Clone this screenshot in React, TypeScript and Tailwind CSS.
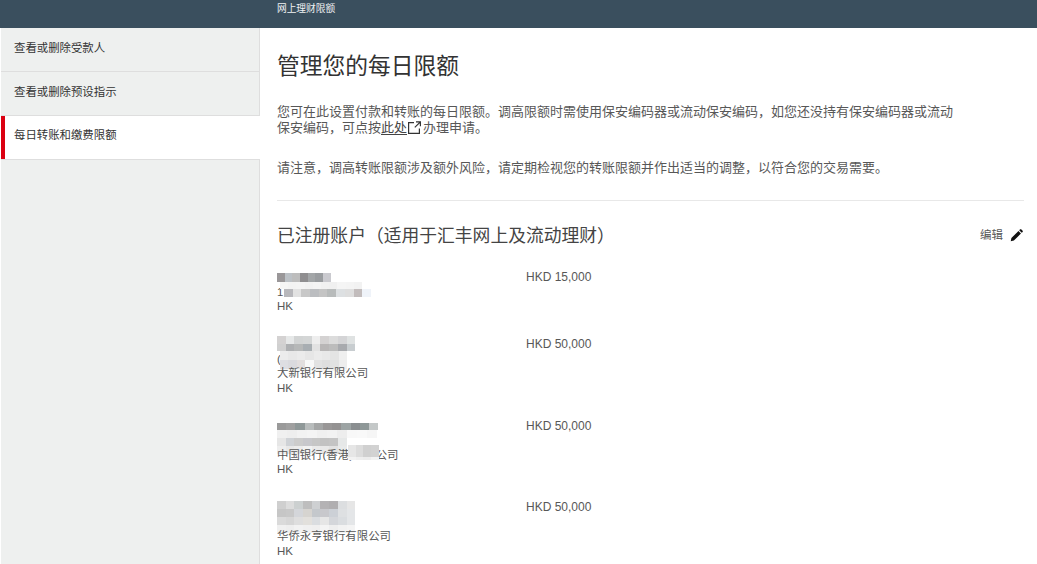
const font = "font-['Liberation_Sans','Noto_Sans_CJK_SC',sans-serif]";

interface MosaicRow {
  x: number;
  h: number;
  w: number;
  c: string[];
}

interface Account {
  under: string;
  bank?: string;
  amount: string;
  top: number;
  mosaic: MosaicRow[];
  patch?: MosaicRow[];
}

const accounts: Account[] = [
  {
    under: "1",
    amount: "HKD 15,000",
    top: 3,
    mosaic: [
      { x: 0, h: 9, w: 7.7, c: ["#9a9799", "#bcc1c6", "#bdbdbd", "#8f8e90", "#a3a6a8", "#9a9da0", "#cacacf"] },
      { x: 3, h: 7, w: 8.2, c: ["#f5f5f5", "#f3f3f3", "#f4f4f4", "#f2f2f2", "#f4f4f4", "#f1f1f1", "#f0f0f0", "#f5f5f5", "#f4f4f4", "#f2f2f2"] },
      { x: 7, h: 8, w: 8.7, c: ["#b8b8bc", "#e2e2e2", "#c8c8c8", "#bbbdc0", "#c4c4c4", "#b8bbbb", "#dde0e2", "#dedede", "#c2bcbc", "#eff3f9"] },
    ],
  },
  {
    under: "(",
    bank: "大新银行有限公司",
    amount: "HKD 50,000",
    top: -1.2,
    mosaic: [
      { x: 0, h: 8, w: 8.7, c: ["#d4d2d2", "#e6e8e8", "#d2d4d4", "#d4d6d6", "#eeeeee", "#d4d2d2", "#dcdcdc", "#d4d4d6", "#dfe2e2"] },
      { x: 0, h: 7.5, w: 8.7, c: ["#d0d0d0", "#aeb0b2", "#b6b8b8", "#a8aeb2", "#e2e2e2", "#b8b6b6", "#bcbcbc", "#a8aaae", "#c8cdd0"] },
      { x: 3, h: 8.5, w: 8.4, c: ["#ececec", "#e8e8e8", "#ebebeb", "#e6e6e6", "#ebebeb", "#e8e8e8", "#e4e4e4", "#efefef"] },
      { x: 3, h: 9, w: 8.4, c: ["#dedee2", "#dadade", "#e2dede", "#f8f8f8", "#e2e2e2", "#dedede", "#e2e2e2", "#ededed"] },
      { x: 3, h: 2, w: 8.4, c: ["#f2f2f2", "#f4f4f4", "#f2f2f2", "#f6f6f6", "#f2f2f2", "#f4f4f4", "#f2f2f2", "#f6f6f6"] },
    ],
  },
  {
    under: "",
    bank: "中国银行(香港)有限公司",
    amount: "HKD 50,000",
    top: 4.2,
    mosaic: [
      { x: 0, h: 7.3, w: 9.2, c: ["#9a9a9a", "#a0a0a0", "#8f9898", "#b8bcbc", "#a4a6a6", "#999797", "#949292", "#9da4a4", "#8a8e90", "#8f9898", "#c4c8c8"] },
      { x: 0, h: 7.7, w: 10, c: ["#f0f0f0", "#eeeeee", "#f2f2f2", "#f4f4f4", "#f0f0f0", "#f2f2f2", "#ededed", "#f8f8f8", "#f9f9f9", "#f6f6f6"] },
      { x: 0, h: 8.3, w: 8.7, c: ["#e6e6e6", "#cfd2d6", "#cccccc", "#c8c8cc", "#c6c6c6", "#c2c2c2", "#c4c4c4", "#e6e8e8"] },
      { x: 0, h: 8.3, w: 8.7, c: ["#eeeeee", "#e8e8e8", "#ececec", "#f2f2f2", "#eaeaea", "#e8e8e8", "#e2e2e2", "#e8eaea"] },
    ],
    patch: [
      { x: 0, h: 12, w: 7.7, c: ["#e6e6e6", "#dcdcdc", "#d0d0d0", "#d2d2d2"] },
      { x: 0, h: 3, w: 7.7, c: ["#f2f2f2", "#eeeeee", "#ececec", "#f2f2f2"] },
    ],
  },
  {
    under: "",
    bank: "华侨永亨银行有限公司",
    amount: "HKD 50,000",
    top: 0.8,
    mosaic: [
      { x: 0, h: 8, w: 8.7, c: ["#cfcfcf", "#dcdcdc", "#ccd0d0", "#bebebe", "#ced0d2", "#b4b2b4", "#b0aeb0", "#dcdee0", "#e6e6e6"] },
      { x: 0, h: 8, w: 8.7, c: ["#c6c6c6", "#c8c8c8", "#d4d6da", "#d6d4d0", "#c4c8cc", "#c8c8cc", "#ccd0d6", "#dee0e2", "#e4e6e8"] },
      { x: 0, h: 8, w: 8.7, c: ["#dadada", "#d6d6d6", "#dedede", "#e2e0dc", "#dadde0", "#e6e6e6", "#d4d6da", "#dadde0", "#e4e6e8"] },
      { x: 0, h: 8, w: 8.7, c: ["#f0f0f0", "#eeeeee", "#f2f2f2", "#f0f0f0", "#efefef", "#f4f4f4", "#eeeeee", "#f2f2f2", "#f4f4f4"] },
    ],
  },
];

const menu = ["查看或删除受款人", "查看或删除预设指示"];

function Mosaic({ rows }: { rows: MosaicRow[] }) {
  return (
    <div>
      {rows.map((r, i) => (
        <div key={i} className="flex" style={{ height: r.h, marginLeft: r.x }}>
          {r.c.map((c, j) => (
            <div key={j} className="shrink-0" style={{ background: c, width: r.w }} />
          ))}
        </div>
      ))}
    </div>
  );
}

export default function App() {
  return (
    <div className={`${font} [text-spacing-trim:space-all] h-screen overflow-hidden bg-white flex flex-col text-[#575757]`}>
      {/* Header */}
      <div className="h-7 shrink-0 bg-[#3a4f5e] flex items-start pl-[277px] pt-[2px]">
        <span className="text-[9.7px] leading-[14px] text-[#f0f2f3]">网上理财限额</span>
      </div>

      <div className="flex flex-1 min-h-0">
        {/* Sidebar */}
        <div className="w-[259px] ml-px shrink-0 bg-[#eef0ef] border-r border-[#dedede] text-[11.4px] text-[#333333]">
          {menu.map((m) => (
            <div key={m} className="h-11 flex items-center pl-[13px] pb-[2px] border-b border-[#dedede]">
              {m}
            </div>
          ))}
          <div className="h-[43px] flex items-center pl-[9px] pb-[4px] bg-white border-l-4 border-[#db0011] mr-[-1px]">
            每日转账和缴费限额
          </div>
          <div className="border-t border-[#dedede]" />
        </div>

        {/* Main */}
        <div className="flex-1 min-w-0 pl-[17px] pr-[13px]">
          <h1 className="mt-[23px] text-[22.75px] leading-[30px] text-[#333333]">管理您的每日限额</h1>

          <p className="mt-[23px] text-[13px] leading-[15.5px] w-[680px]">
            您可在此设置付款和转账的每日限额。调高限额时需使用保安编码器或流动保安编码，如您还没持有保安编码器或流动保安编码，可点按
            <a className="underline underline-offset-2 text-[#444444]">此处</a>
            <svg className="inline-block w-[13px] h-[13px] ml-px mr-[2px] align-[-2px]" viewBox="0 0 13 13" fill="none" stroke="#333333" strokeWidth="1.2">
              <path d="M6 1.6H0.6v10.8h10.8V7.5" />
              <path d="M8 0.8h4.4v4.4M12.4 0.8 6.8 6.4" />
            </svg>
            办理申请。
          </p>
          <p className="mt-[25px] text-[13px] leading-[15.5px]">
            请注意，调高转账限额涉及额外风险，请定期检视您的转账限额并作出适当的调整，以符合您的交易需要。
          </p>

          <div className="mt-6 border-t border-[#e8e8e8]" />

          <div className="mt-[23px] flex items-center justify-between h-6">
            <h2 className="text-[17.8px] leading-6 text-[#444444]">已注册账户（适用于汇丰网上及流动理财）</h2>
            <div className="flex items-center gap-[7px] text-[11.5px] pr-px">
              <span>编辑</span>
              <svg className="w-[13px] h-[13px]" viewBox="0 0 14 14" fill="#111111">
                <path d="M0.8 13.2l0.7-3.4 7.6-7.6 2.7 2.7-7.6 7.6zM9.9 1.4l1-1a0.8 0.8 0 0 1 1.1 0l1.6 1.6a0.8 0.8 0 0 1 0 1.1l-1 1z" />
              </svg>
            </div>
          </div>

          {/* Accounts */}
          <div className="mt-[22.5px] flex flex-col gap-[23.5px] text-[11.4px] leading-[14.5px]">
            {accounts.map((a) => (
              <div key={a.amount + a.top} className="flex items-start">
                <div className="w-[249px] shrink-0 relative">
                  <div className="h-[14.5px]" />
                  <div className="h-[14.5px]">{a.under}</div>
                  <div className="absolute left-0" style={{ top: a.top }}>
                    <Mosaic rows={a.mosaic} />
                  </div>
                  {a.bank && (
                    <div className="relative">
                      {a.bank}
                      {a.patch && (
                        <div className="absolute left-[71px] top-[-3px]">
                          <Mosaic rows={a.patch} />
                        </div>
                      )}
                    </div>
                  )}
                  <div className="text-[11.5px]">HK</div>
                </div>
                <div className="text-[12px]">{a.amount}</div>
              </div>
            ))}
          </div>
        </div>
      </div>
    </div>
  );
}
